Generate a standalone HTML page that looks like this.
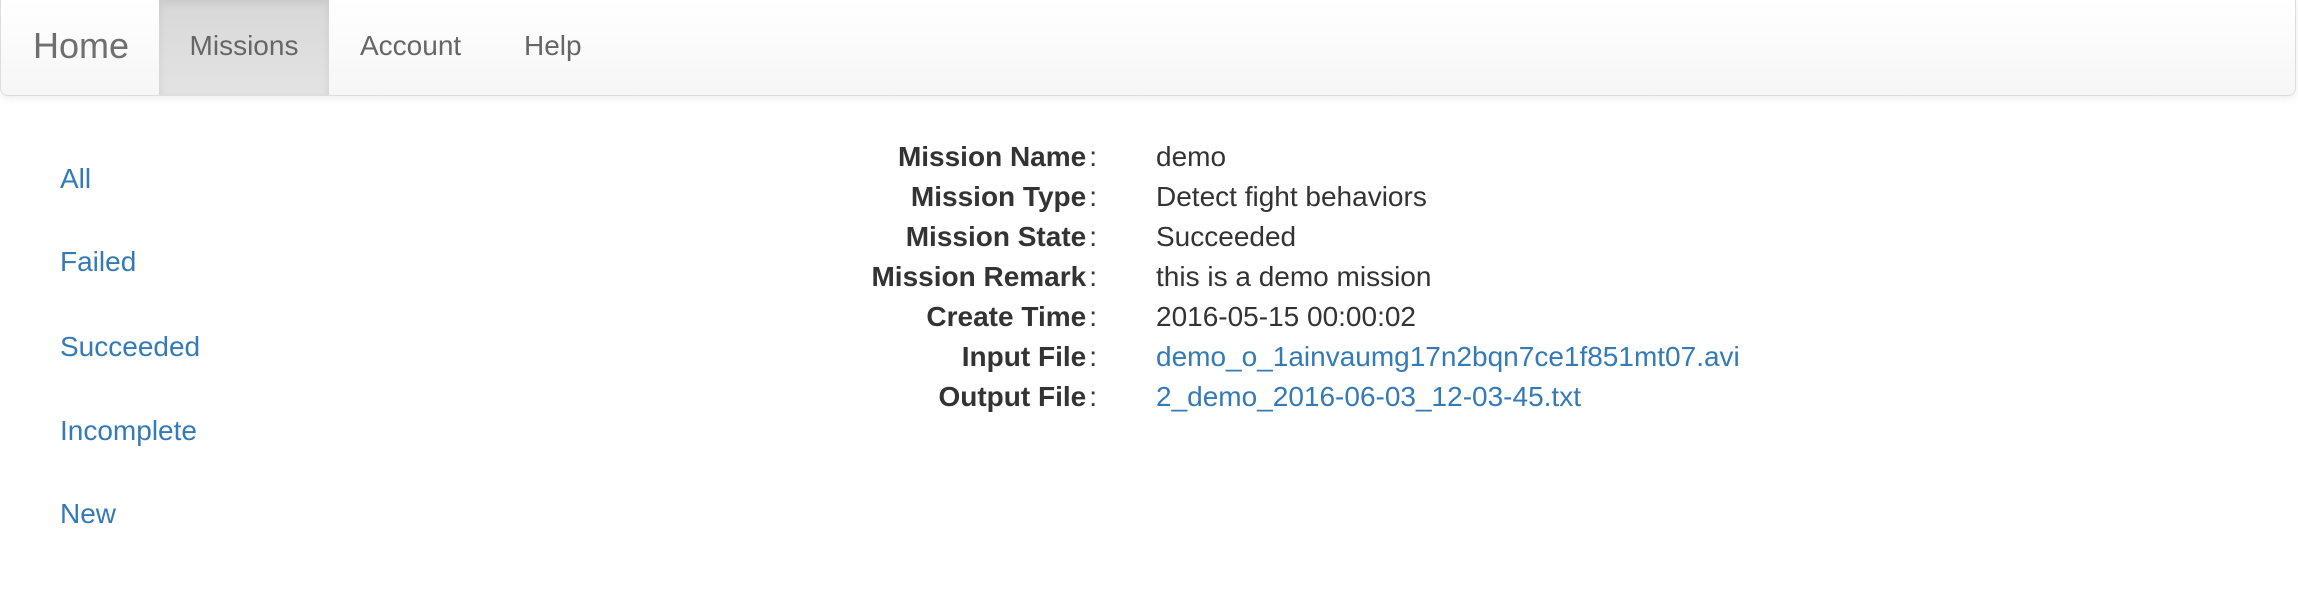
<!DOCTYPE html>
<html><head><meta charset="utf-8"><style>
body{margin:0;width:2298px;height:608px;background:#fff;font-family:"Liberation Sans",Helvetica,Arial,sans-serif;position:relative;overflow:hidden}
.nav{position:absolute;left:0;top:0;width:2294px;height:95px;border:1px solid #ddd;border-top:none;border-radius:0 0 8px 8px;background:linear-gradient(#fff,#f6f6f6);box-shadow:0 2px 8px rgba(0,0,0,.08)}
.nav span{position:absolute;top:0;height:95px;line-height:92px;color:#666;font-size:28px}
.brand{left:32px;font-size:36px!important;color:#6f6f6f!important}
.act{left:158px;width:170px;background:linear-gradient(#d8d8d8,#e3e3e3);text-align:center;box-shadow:inset 0 3px 9px rgba(0,0,0,.08)}
.side a{position:absolute;left:60px;color:#337ab7;font-size:28px;text-decoration:none;transform:translateY(-50%)}
.row{position:absolute;left:0;width:2298px;height:40px;line-height:40px;font-size:28px;color:#333;margin-top:-20px}
.lab{position:absolute;width:1097px;text-align:right;left:0;top:0;font-weight:bold}
.lab:after{content:":";font-weight:normal;margin-left:3px}
.val{position:absolute;left:1156px;top:0;white-space:nowrap}
.val a{color:#337ab7;text-decoration:none}
</style></head><body>
<div class="nav">
<span class="brand">Home</span>
<span class="act">Missions</span>
<span style="left:359px">Account</span>
<span style="left:523px">Help</span>
</div>
<div class="side">
<a style="top:179px">All</a>
<a style="top:262px">Failed</a>
<a style="top:347px">Succeeded</a>
<a style="top:431px">Incomplete</a>
<a style="top:514px">New</a>
</div>
<div class="row" style="top:157px"><div class="lab">Mission Name</div><div class="val">demo</div></div>
<div class="row" style="top:197px"><div class="lab">Mission Type</div><div class="val">Detect fight behaviors</div></div>
<div class="row" style="top:237px"><div class="lab">Mission State</div><div class="val">Succeeded</div></div>
<div class="row" style="top:277px"><div class="lab">Mission Remark</div><div class="val">this is a demo mission</div></div>
<div class="row" style="top:317px"><div class="lab">Create Time</div><div class="val">2016-05-15 00:00:02</div></div>
<div class="row" style="top:357px"><div class="lab">Input File</div><div class="val"><a>demo_o_1ainvaumg17n2bqn7ce1f851mt07.avi</a></div></div>
<div class="row" style="top:397px"><div class="lab">Output File</div><div class="val"><a>2_demo_2016-06-03_12-03-45.txt</a></div></div>
</body></html>
